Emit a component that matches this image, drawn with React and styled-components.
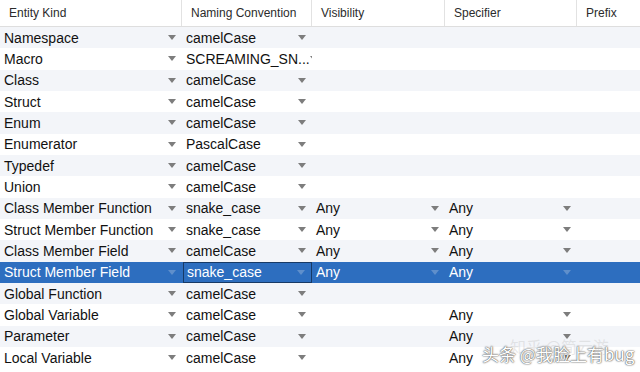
import React from "react";
import styled, { createGlobalStyle } from "styled-components";

const GlobalStyle = createGlobalStyle`
  html, body {
    margin: 0;
    padding: 0;
    background: #fff;
  }
  body {
    font-family: "Liberation Sans", Arial, sans-serif;
  }
`;

const COLS = "182px 130px 133px 132px 63px";

const rows = [
  ["Namespace", "camelCase", "", ""],
  ["Macro", "SCREAMING_SN...", "", ""],
  ["Class", "camelCase", "", ""],
  ["Struct", "camelCase", "", ""],
  ["Enum", "camelCase", "", ""],
  ["Enumerator", "PascalCase", "", ""],
  ["Typedef", "camelCase", "", ""],
  ["Union", "camelCase", "", ""],
  ["Class Member Function", "snake_case", "Any", "Any"],
  ["Struct Member Function", "snake_case", "Any", "Any"],
  ["Class Member Field", "camelCase", "Any", "Any"],
  ["Struct Member Field", "snake_case", "Any", "Any"],
  ["Global Function", "camelCase", "", ""],
  ["Global Variable", "camelCase", "", "Any"],
  ["Parameter", "camelCase", "", "Any"],
  ["Local Variable", "camelCase", "", "Any"],
];

const SELECTED = 11;

export default function App() {
  return (
    <>
      <GlobalStyle />
      <Page>
        <Header>
          <HeadCell>Entity Kind</HeadCell>
          <HeadCell>Naming Convention</HeadCell>
          <HeadCell>Visibility</HeadCell>
          <HeadCell>Specifier</HeadCell>
          <HeadCell last>Prefix</HeadCell>
        </Header>
        {rows.map((r, i) => {
          const sel = i === SELECTED;
          return (
            <Row key={r[0]} odd={i % 2 === 0} selected={sel}>
              <Cell>
                <span>{r[0]}</span>
                <Arrow selected={sel} />
              </Cell>
              <Cell focused={sel}>
                <span>{r[1]}</span>
                <Arrow selected={sel} />
              </Cell>
              <Cell>
                <span>{r[2]}</span>
                {r[2] && <Arrow selected={sel} />}
              </Cell>
              <Cell>
                <span>{r[3]}</span>
                {r[3] && <Arrow selected={sel} />}
              </Cell>
              <Cell />
            </Row>
          );
        })}
        <Watermark>
          <Faint>知乎 @简云游</Faint>
          头条 @我脸上有bug
        </Watermark>
      </Page>
    </>
  );
}

const Page = styled.div`
  position: relative;
  width: 640px;
  height: 372px;
  overflow: hidden;
  background: #fff;
`;

const Header = styled.div`
  display: grid;
  grid-template-columns: ${COLS};
  height: 26px;
  border-bottom: 1px solid #dedede;
`;

const HeadCell = styled.div`
  display: flex;
  align-items: center;
  padding-left: 9px;
  font-size: 12px;
  color: #2b2b2b;
  border-right: ${(p) => (p.last ? "none" : "1px solid #e2e2e2")};
`;

const Row = styled.div`
  display: grid;
  grid-template-columns: ${COLS};
  height: 21.33px;
  background: ${(p) => (p.selected ? "#2d6ebf" : p.odd ? "#f3f5f9" : "#fff")};
  color: ${(p) => (p.selected ? "#fff" : "#111")};
`;

const Cell = styled.div`
  display: flex;
  align-items: center;
  justify-content: space-between;
  padding: 0 6px 0 4px;
  font-size: 14px;
  white-space: nowrap;
  overflow: hidden;
  box-sizing: border-box;
  border: ${(p) => (p.focused ? "1px solid #173a66" : "none")};
  padding-left: ${(p) => (p.focused ? "3px" : "4px")};
  margin-left: ${(p) => (p.focused ? "1px" : "0")};
`;

const Arrow = styled.i`
  flex: none;
  width: 0;
  height: 0;
  border-left: 4px solid transparent;
  border-right: 4px solid transparent;
  border-top: 5px solid ${(p) => (p.selected ? "#5f8fcb" : "#7d7d7d")};
`;

const Watermark = styled.div`
  position: absolute;
  left: 482px;
  top: 341px;
  font-family: "Noto Sans CJK SC", sans-serif;
  font-size: 17px;
  color: #fff;
  text-shadow: 0 0 2px #555, 0 0 1px #333;
  white-space: nowrap;
`;

const Faint = styled.span`
  position: absolute;
  left: 28px;
  top: -7px;
  color: rgba(190, 190, 190, 0.35);
  text-shadow: none;
  font-size: 16px;
`;
